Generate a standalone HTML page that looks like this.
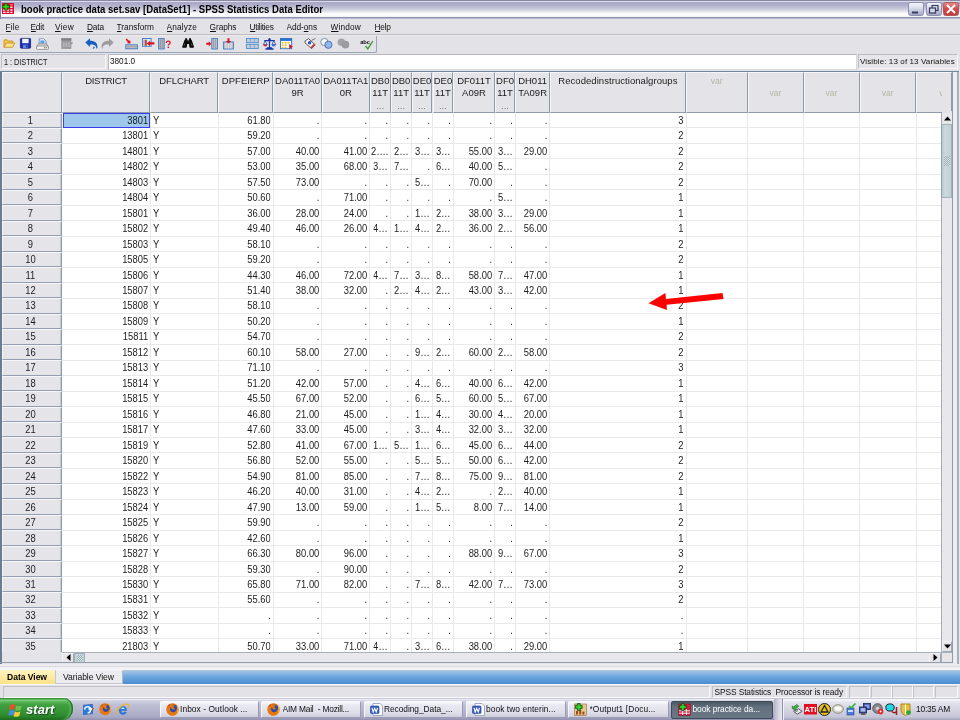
<!DOCTYPE html>
<html><head><meta charset="utf-8"><title>SPSS Statistics Data Editor</title>
<style>
html,body{margin:0;padding:0;}
html{background:#e3e3e7;}
body{will-change:transform;filter:blur(0.35px);width:960px;height:720px;overflow:hidden;background:#e3e3e7;font-family:"Liberation Sans",sans-serif;position:relative;}
div{position:absolute;box-sizing:border-box;}
svg{position:absolute;overflow:visible;}
.t{white-space:nowrap;overflow:hidden;}
u{text-decoration:underline;}
.rh{background:#e5e5e9;border-top:1px solid #f6f6f9;border-left:1px solid #f6f6f9;border-bottom:1px solid #939fb0;border-right:1px solid #8c9aac;box-shadow:inset -1px 0 0 #c4cad4;}
</style></head><body>

<div style="left:0px;top:0px;width:960px;height:19px;background:linear-gradient(to bottom,#8686a0 0px,#8a8aa6 0.7px,#ececf4 1.3px,#a6a6c6 2.2px,#b4b4ce 6px,#d4d4e2 10px,#fafafc 13.5px,#ffffff 15px,#f4f4f8 16.5px,#9090ae 17.2px,#9292b0 17.9px,#c8c8d6 18.7px,#e3e3e7 19px);"></div>
<svg style="left:1.5px;top:2.7px" width="12" height="11" viewBox="0 0 12 11"><rect width="12" height="11" rx=".6" fill="#de0a2c"/><path d="M8.300 3.600h2.200v1.500H8.300zM8.300 6.200h2.200v1.500H8.300zM8.300 8.700h2.200v1.200H8.300zM1 6.600h2.600v1.200H1zM4.600 6.600h2.600v1.200H4.600zM1 8.700h2.600v1.200H1zM4.600 8.700h2.600v1.200H4.600z" fill="#fff" fill-opacity=".92"/><path d="M8.300 1.200h2.200v1.200H8.300z" fill="#f8a0a8"/><path d="M2.800.5h2.400v2h2.200v2.400H5.200v2.200H2.800V4.900H.6V2.500h2.200z" fill="#1fe010" stroke="#0a4a0a" stroke-width=".7"/></svg>
<div style="left:0px;top:0px;width:1px;height:19px;background:#8484a6;"></div>
<div class="t" style="left:21px;top:0.6px;width:360px;height:17px;line-height:17px;font-size:10.3px;text-align:left;color:#000;font-weight:bold;transform:scaleX(0.9275);transform-origin:0 0;">book practice data set.sav [DataSet1] - SPSS Statistics Data Editor</div>
<div style="left:908px;top:2px;width:16px;height:14px;border:1px solid #8d8fb0;border-radius:2.5px;background:linear-gradient(to bottom,#f4f5fb 0%,#d9dbea 45%,#a4a7c6 100%);"></div>
<div style="left:926px;top:2px;width:16px;height:14px;border:1px solid #8d8fb0;border-radius:2.5px;background:linear-gradient(to bottom,#f4f5fb 0%,#d9dbea 45%,#a4a7c6 100%);"></div>
<div style="left:943px;top:2px;width:16px;height:14px;border:1px solid #b05a5a;border-radius:2.5px;background:linear-gradient(to bottom,#e58a86 0%,#d24a48 50%,#c03c3c 100%);"></div>
<svg style="left:908px;top:2px" width="16" height="14"><rect x="4" y="9.5" width="6" height="2" fill="#3a3c5c"/></svg>
<svg style="left:926px;top:2px" width="16" height="14"><rect x="6" y="3.5" width="6" height="5" fill="none" stroke="#3a3c5c" stroke-width="1.2"/><rect x="3.5" y="6" width="6" height="5" fill="#d5d7e8" stroke="#3a3c5c" stroke-width="1.2"/></svg>
<svg style="left:943px;top:2px" width="16" height="14"><path d="M4 3L12 11M12 3L4 11" stroke="#fff" stroke-width="1.9"/></svg>
<div style="left:0px;top:19px;width:960px;height:15px;background:#e3e3e7;"></div>
<div class="t" style="left:5.5px;top:21px;width:20px;height:13px;line-height:13px;font-size:8.3px;text-align:left;color:#111;letter-spacing:0.152px;"><u>F</u>ile</div>
<div class="t" style="left:30.5px;top:21px;width:19.5px;height:13px;line-height:13px;font-size:8.3px;text-align:left;color:#111;letter-spacing:-0.203px;"><u>E</u>dit</div>
<div class="t" style="left:55px;top:21px;width:25px;height:13px;line-height:13px;font-size:8.3px;text-align:left;color:#111;letter-spacing:0.289px;"><u>V</u>iew</div>
<div class="t" style="left:87px;top:21px;width:23px;height:13px;line-height:13px;font-size:8.3px;text-align:left;color:#111;letter-spacing:-0.137px;"><u>D</u>ata</div>
<div class="t" style="left:116.5px;top:21px;width:43.5px;height:13px;line-height:13px;font-size:8.3px;text-align:left;color:#111;letter-spacing:0.000px;"><u>T</u>ransform</div>
<div class="t" style="left:166.5px;top:21px;width:36.5px;height:13px;line-height:13px;font-size:8.3px;text-align:left;color:#111;letter-spacing:0.138px;"><u>A</u>nalyze</div>
<div class="t" style="left:209.5px;top:21px;width:33px;height:13px;line-height:13px;font-size:8.3px;text-align:left;color:#111;letter-spacing:-0.039px;"><u>G</u>raphs</div>
<div class="t" style="left:249.5px;top:21px;width:30px;height:13px;line-height:13px;font-size:8.3px;text-align:left;color:#111;letter-spacing:-0.306px;"><u>U</u>tilities</div>
<div class="t" style="left:286.5px;top:21px;width:36.5px;height:13px;line-height:13px;font-size:8.3px;text-align:left;color:#111;letter-spacing:-0.060px;">Add-<u>o</u>ns</div>
<div class="t" style="left:330.5px;top:21px;width:36.5px;height:13px;line-height:13px;font-size:8.3px;text-align:left;color:#111;letter-spacing:0.162px;"><u>W</u>indow</div>
<div class="t" style="left:374.5px;top:21px;width:22px;height:13px;line-height:13px;font-size:8.3px;text-align:left;color:#111;letter-spacing:-0.270px;"><u>H</u>elp</div>
<div style="left:0px;top:34px;width:960px;height:1px;background:#bcbcc1;"></div>
<div style="left:0px;top:35px;width:960px;height:18px;background:#e3e3e7;border-top:1px solid #ececf0;"></div>
<div style="left:-2px;top:35.5px;width:379px;height:17.5px;border:1px solid #97a8bb;border-top:none;border-radius:0 0 2.5px 0;"></div>
<svg style="left:3px;top:38px" width="13" height="11" viewBox="0 0 13 11"><path d="M1 9.2V2.6q0-.8.8-.8h2.4l1 1.2h4q.8 0 .8.8V5" fill="#f3c54a" stroke="#c48a1c" stroke-width=".8"/><path d="M1 9.3L3.2 5h8.6L9.6 9.3z" fill="#fbe28a" stroke="#c48a1c" stroke-width=".8"/></svg>
<svg style="left:20px;top:37.5px" width="11" height="11" viewBox="0 0 11 11"><rect x=".4" y=".4" width="10.2" height="9.8" rx=".8" fill="#1c2eb6" stroke="#0c146a" stroke-width=".7"/><rect x="2.2" y=".8" width="6.4" height="4.4" fill="#f4f6ff"/><rect x="3" y="6.8" width="5" height="3.2" fill="#5a86e0"/><rect x="6.2" y="7.4" width="1.2" height="2.2" fill="#10208a"/></svg>
<svg style="left:36px;top:38px" width="13" height="12" viewBox="0 0 13 12"><path d="M3.2 6V.8h4.6L10 3v3" fill="#fff" stroke="#6a7aa0" stroke-width=".8"/><rect x="4.3" y="2.4" width="4.2" height="3" fill="#4aa2ee"/><path d="M.6 9.4L2.4 5.8h8.2l1.8 3.6z" fill="#d8d8dc" stroke="#777" stroke-width=".7"/><rect x=".6" y="8" width="11.8" height="3.4" rx=".6" fill="#f4f4f6" stroke="#777" stroke-width=".7"/><rect x="8" y="9.2" width="1.3" height="1.1" fill="#e03030"/><rect x="9.8" y="9.2" width="1.3" height="1.1" fill="#30b040"/></svg>
<svg style="left:60.5px;top:38px" width="12.5" height="11.5" viewBox="0 0 12.5 11.5"><rect x=".3" y=".3" width="10" height="10.6" fill="#9a9a9e"/><rect x="0.3" y=".3" width="10" height="2.2" fill="#808084"/><rect x="2" y="4.4" width="1.6" height="4.6" fill="#b6b6ba"/><rect x="4.6" y="4.4" width="1.6" height="4.6" fill="#b6b6ba"/><rect x="7.2" y="4.4" width="1.6" height="4.6" fill="#b6b6ba"/><path d="M9.2 4.6h3l-1.5 2z" fill="#88888c"/></svg>
<svg style="left:84.5px;top:38px" width="13" height="11" viewBox="0 0 13 11"><path d="M.3 4.4L5 .3v2.5c4.4-.2 7.6 2 7.4 6.2-.1 1-.5 1.7-1.2 1.8.6-2.6-1.6-4.6-6.2-4.2v2.4z" fill="#1560c0"/><path d="M8.2 8.6c.4 1.2-.2 2-1.2 2.2 1.4.3 2.6-.4 2.8-1.8z" fill="#1560c0"/></svg>
<svg style="left:100.8px;top:38px" width="13" height="11" viewBox="0 0 13 11"><path d="M12.7 4.4L8 .3v2.5C3.600 2.600.4 4.800.6 9c.1 1 .5 1.700 1.200 1.800C1.200 8.200 3.400 6.200 8 6.600v2.400z" fill="#9c9c9e"/></svg>
<svg style="left:124.5px;top:38.3px" width="13" height="11.2" viewBox="0 0 13 11.2"><path d="M.6 1.4l1-1 2.600 2.500 1-1 .3 3.600-3.600-.3 1-1z" fill="#e01020"/><rect x=".8" y="6.800" width="11.600" height="4" fill="#c8c8cc" stroke="#3a78c8" stroke-width=".9"/><path d="M1.500 8.800h10.300" stroke="#8a8a90" stroke-width=".8"/></svg>
<svg style="left:141.7px;top:37.8px" width="12.6" height="9.2" viewBox="0 0 12.6 9.2"><rect x=".5" y=".5" width="8.600" height="7.800" fill="#e4e6ee" stroke="#3a78c8" stroke-width=".9"/><rect x="2.600" y="1.800" width="2.200" height="6" fill="#b04848"/><rect x="1.200" y="1.800" width="1" height="6" fill="#b8b8c0"/><path d="M4.800 5.400l3.200-2.700v1.600h4.400v2.200h-4.400v1.600z" fill="#e01020"/></svg>
<svg style="left:157.8px;top:37.8px" width="13" height="11.6" viewBox="0 0 13 11.6"><rect x=".6" y=".6" width="5.600" height="10.400" fill="#b8b8bc" stroke="#3a78c8" stroke-width=".9"/><path d="M2.400 1.500v8.600M4.200 1.500v8.600" stroke="#8a8a90" stroke-width=".7"/><path d="M8.300 5q0-1.800 1.900-1.800t1.900 1.500q0 1-1 1.500-.8.500-.8 1.300" fill="none" stroke="#e01020" stroke-width="1.300"/><rect x="9.600" y="8.600" width="1.400" height="1.400" fill="#e01020"/></svg>
<svg style="left:182px;top:38px" width="12.2" height="10" viewBox="0 0 12.2 10"><path d="M.2 8.800L2.400 2.200q.2-.8.8-.8V.3h1.900v1.100q.6 0 .7.800v1h.6v-1q.1-.8.700-.8V.3h1.900v1.100q.6 0 .8.800l2.200 6.600q.2.900-.6.900H8.200q-.7 0-.8-.8L7 6H5.200l-.4 2.900q-.1.800-.8.800H.8q-.8 0-.6-.9z" fill="#0a0a0a"/><path d="M2.200 7.600l.6-2M9.400 5.600l.6 2" stroke="#888" stroke-width=".6"/></svg>
<svg style="left:205.8px;top:37.8px" width="12.2" height="11.6" viewBox="0 0 12.2 11.6"><rect x="5.800" y=".6" width="5.600" height="10.400" fill="#c4c4c8" stroke="#3a78c8" stroke-width=".9"/><path d="M7.600 1.500v8.600M9.400 1.500v8.600" stroke="#8a8a90" stroke-width=".7"/><path d="M5.400 5.800L2.800 3.200v1.600H.3v2h2.500v1.600z" fill="#e01020"/></svg>
<svg style="left:222.8px;top:37.8px" width="11" height="11.6" viewBox="0 0 11 11.6"><rect x=".6" y="4" width="9.800" height="7" fill="#c4c4c8" stroke="#3a78c8" stroke-width=".9"/><path d="M3 4.800v5.800M5.500 4.800v5.800M8 4.800v5.800" stroke="#f0f0f4" stroke-width=".8"/><path d="M5.500 5.600L2.900 3h1.600V.2h2V3h1.600z" fill="#e01020"/></svg>
<svg style="left:246.3px;top:38px" width="12.8" height="11.2" viewBox="0 0 12.8 11.2"><rect x=".5" y=".5" width="11.800" height="4.200" fill="#c8ccd4" stroke="#4a90d8" stroke-width=".9"/><rect x=".5" y="6.300" width="11.800" height="4.200" fill="#c8ccd4" stroke="#4a90d8" stroke-width=".9"/><path d="M4.400.8v3.600M8.400.8v3.600M4.400 6.600v3.600M8.400 6.600v3.600" stroke="#6aa4e0" stroke-width=".8"/></svg>
<svg style="left:263px;top:37.8px" width="13" height="11.4" viewBox="0 0 13 11.4"><path d="M6.500.2v10M2.400 11h8.200M3.800 10h5.400M1.200 2.600h10.600" stroke="#1838a8" stroke-width="1.300" fill="none"/><circle cx="6.500" cy="1.400" r="1.200" fill="#1838a8"/><path d="M2.200 2.800L.4 6.600h3.800zM10.800 2.800L9 6.600h3.800z" fill="none" stroke="#1838a8" stroke-width=".7"/><path d="M.2 6.400h4.200q-.2 2-2.100 2T.2 6.400z" fill="#e02828"/><path d="M8.600 6.400h4.200q-.2 2-2.100 2t-2.100-2z" fill="#3a6ad8"/></svg>
<svg style="left:279.5px;top:37.8px" width="13" height="11.4" viewBox="0 0 13 11.4"><rect x=".5" y=".5" width="11.200" height="10.200" fill="#fff" stroke="#2a70c8" stroke-width=".9"/><rect x=".5" y=".5" width="11.200" height="2.400" fill="#2a70c8"/><rect x="1.600" y="4" width="2" height="1.600" fill="#f0c030"/><rect x="4.600" y="4" width="2" height="1.600" fill="#f0c030"/><rect x="7.600" y="4" width="2" height="1.600" fill="#f0c030"/><rect x="1.600" y="6.400" width="2" height="1.600" fill="#f0c030"/><rect x="4.600" y="6.400" width="2" height="1.600" fill="#f0c030"/><rect x="1.600" y="8.700" width="2" height="1.400" fill="#f0c030"/><rect x="4.600" y="8.700" width="2" height="1.400" fill="#f0c030"/><path d="M12.800 8.600L9.200 6v5.200z" fill="#e01020"/></svg>
<svg style="left:304px;top:38px" width="12.4" height="11" viewBox="0 0 12.4 11"><path d="M1.200 2.800L4.600.6l6.600 6.200-3.600 3.800L1 4.800z" fill="#f4f4f8" stroke="#333" stroke-width=".8"/><path d="M6.400 9.400l3.400-3.600 1.400 1.200-3.600 3.600z" fill="#d83030"/><circle cx="5.600" cy="4.800" r="1.700" fill="#3050c0"/><path d="M7.600 2.400L11.600.4" stroke="#333" stroke-width=".6"/></svg>
<svg style="left:319.8px;top:38px" width="13" height="11" viewBox="0 0 13 11"><circle cx="4.400" cy="4" r="3.600" fill="#f4f6fa" stroke="#6a7a90" stroke-width=".8"/><circle cx="8.400" cy="6.800" r="3.600" fill="#8ab4ec" fill-opacity=".9" stroke="#3a62b0" stroke-width=".8"/></svg>
<svg style="left:337.2px;top:38.2px" width="13" height="11" viewBox="0 0 13 11"><circle cx="4.400" cy="4.200" r="3.800" fill="#a4a4a6"/><circle cx="8.400" cy="6.600" r="3.900" fill="#9c9c9e"/></svg>
<svg style="left:360px;top:37.5px" width="14" height="12" viewBox="0 0 14 12"><text x=".2" y="5.800" font-family="Liberation Sans, sans-serif" font-size="6" font-weight="bold" fill="#111" textLength="9.800" lengthAdjust="spacingAndGlyphs">abc</text><path d="M5.600 8l2.200 2.800L12.800 3.200" fill="none" stroke="#3a9a2a" stroke-width="1.300"/></svg>
<div style="left:0px;top:53px;width:960px;height:18px;background:#e3e3e7;"></div>
<div style="left:1px;top:54px;width:105px;height:15px;border:1px solid #c2c2c8;border-right-color:#f8f8fa;border-bottom-color:#f8f8fa;background:#e4e4e8;"></div>
<div class="t" style="left:3.5px;top:55.5px;width:100px;height:13px;line-height:13px;font-size:8.4px;text-align:left;color:#111;transform:scaleX(0.865);transform-origin:0 0;">1 : DISTRICT</div>
<div style="left:108px;top:54px;width:749px;height:16px;background:#fff;border:1px solid #d8d8dc;border-top-color:#b8b8be;border-left-color:#b8b8be;"></div>
<div class="t" style="left:110px;top:55.3px;width:100px;height:13px;line-height:13px;font-size:8.2px;text-align:left;color:#111;letter-spacing:-0.008px;">3801.0</div>
<div style="left:858px;top:54px;width:100px;height:15px;border:1px solid #bcbcc2;border-right-color:#f8f8fa;border-bottom-color:#f8f8fa;background:#e6e6ea;"></div>
<div class="t" style="left:860px;top:55.3px;width:99px;height:13px;line-height:13px;font-size:8px;text-align:left;color:#111;letter-spacing:0.111px;">Visible: 13 of 13 Variables</div>
<div style="left:0px;top:70.5px;width:956px;height:593.5px;background:#e4e4e8;border-top:1.5px solid #6f879f;border-left:2px solid #6c7c90;"></div>
<div style="left:62px;top:112.5px;width:880px;height:539.5px;background:#fff;"></div>
<div style="left:2px;top:72px;width:60px;height:40.5px;background:#e4e4e8;border-right:1px solid #8e9aa8;border-left:1px solid #f6f6f8;border-bottom:1px solid #8e9aa8;border-top:1px solid #f6f6f8;"></div>
<div style="left:62px;top:72px;width:88px;height:40.5px;background:#e4e4e8;border-right:1px solid #8e9aa8;border-left:1px solid #f6f6f8;border-bottom:1px solid #8e9aa8;border-top:1px solid #f6f6f8;"></div>
<div class="t" style="left:59px;top:74.8px;width:94px;height:12.6px;line-height:12.6px;font-size:9.5px;text-align:center;color:#1a1a1a;letter-spacing:-0.258px;">DISTRICT</div>
<div style="left:150px;top:72px;width:68.19999999999999px;height:40.5px;background:#e4e4e8;border-right:1px solid #8e9aa8;border-left:1px solid #f6f6f8;border-bottom:1px solid #8e9aa8;border-top:1px solid #f6f6f8;"></div>
<div class="t" style="left:147px;top:74.8px;width:74.19999999999999px;height:12.6px;line-height:12.6px;font-size:9.5px;text-align:center;color:#1a1a1a;letter-spacing:-0.094px;">DFLCHART</div>
<div style="left:218.2px;top:72px;width:55.10000000000002px;height:40.5px;background:#e4e4e8;border-right:1px solid #8e9aa8;border-left:1px solid #f6f6f8;border-bottom:1px solid #8e9aa8;border-top:1px solid #f6f6f8;"></div>
<div class="t" style="left:215.2px;top:74.8px;width:61.10000000000002px;height:12.6px;line-height:12.6px;font-size:9.5px;text-align:center;color:#1a1a1a;letter-spacing:0.060px;">DPFEIERP</div>
<div style="left:273.3px;top:72px;width:48.5px;height:40.5px;background:#e4e4e8;border-right:1px solid #8e9aa8;border-left:1px solid #f6f6f8;border-bottom:1px solid #8e9aa8;border-top:1px solid #f6f6f8;"></div>
<div class="t" style="left:270.3px;top:74.8px;width:54.5px;height:36.7px;line-height:12.6px;font-size:9.5px;text-align:center;color:#1a1a1a;white-space:nowrap">DA011TA0<br>9R</div>
<div style="left:321.8px;top:72px;width:47.89999999999998px;height:40.5px;background:#e4e4e8;border-right:1px solid #8e9aa8;border-left:1px solid #f6f6f8;border-bottom:1px solid #8e9aa8;border-top:1px solid #f6f6f8;"></div>
<div class="t" style="left:318.8px;top:74.8px;width:53.89999999999998px;height:36.7px;line-height:12.6px;font-size:9.5px;text-align:center;color:#1a1a1a;white-space:nowrap">DA011TA1<br>0R</div>
<div style="left:369.7px;top:72px;width:21.0px;height:40.5px;background:#e4e4e8;border-right:1px solid #8e9aa8;border-left:1px solid #f6f6f8;border-bottom:1px solid #8e9aa8;border-top:1px solid #f6f6f8;"></div>
<div class="t" style="left:366.7px;top:74.8px;width:27.0px;height:36.7px;line-height:12.6px;font-size:9.5px;text-align:center;color:#1a1a1a;white-space:nowrap">DB0<br>11T<br><span style="color:#777">...</span></div>
<div style="left:390.7px;top:72px;width:20.900000000000034px;height:40.5px;background:#e4e4e8;border-right:1px solid #8e9aa8;border-left:1px solid #f6f6f8;border-bottom:1px solid #8e9aa8;border-top:1px solid #f6f6f8;"></div>
<div class="t" style="left:387.7px;top:74.8px;width:26.900000000000034px;height:36.7px;line-height:12.6px;font-size:9.5px;text-align:center;color:#1a1a1a;white-space:nowrap">DB0<br>11T<br><span style="color:#777">...</span></div>
<div style="left:411.6px;top:72px;width:20.899999999999977px;height:40.5px;background:#e4e4e8;border-right:1px solid #8e9aa8;border-left:1px solid #f6f6f8;border-bottom:1px solid #8e9aa8;border-top:1px solid #f6f6f8;"></div>
<div class="t" style="left:408.6px;top:74.8px;width:26.899999999999977px;height:36.7px;line-height:12.6px;font-size:9.5px;text-align:center;color:#1a1a1a;white-space:nowrap">DE0<br>11T<br><span style="color:#777">...</span></div>
<div style="left:432.5px;top:72px;width:20.899999999999977px;height:40.5px;background:#e4e4e8;border-right:1px solid #8e9aa8;border-left:1px solid #f6f6f8;border-bottom:1px solid #8e9aa8;border-top:1px solid #f6f6f8;"></div>
<div class="t" style="left:429.5px;top:74.8px;width:26.899999999999977px;height:36.7px;line-height:12.6px;font-size:9.5px;text-align:center;color:#1a1a1a;white-space:nowrap">DE0<br>11T<br><span style="color:#777">...</span></div>
<div style="left:453.4px;top:72px;width:41.200000000000045px;height:40.5px;background:#e4e4e8;border-right:1px solid #8e9aa8;border-left:1px solid #f6f6f8;border-bottom:1px solid #8e9aa8;border-top:1px solid #f6f6f8;"></div>
<div class="t" style="left:450.4px;top:74.8px;width:47.200000000000045px;height:36.7px;line-height:12.6px;font-size:9.5px;text-align:center;color:#1a1a1a;white-space:nowrap">DF011T<br>A09R</div>
<div style="left:494.6px;top:72px;width:20.799999999999955px;height:40.5px;background:#e4e4e8;border-right:1px solid #8e9aa8;border-left:1px solid #f6f6f8;border-bottom:1px solid #8e9aa8;border-top:1px solid #f6f6f8;"></div>
<div class="t" style="left:491.6px;top:74.8px;width:26.799999999999955px;height:36.7px;line-height:12.6px;font-size:9.5px;text-align:center;color:#1a1a1a;white-space:nowrap">DF0<br>11T<br><span style="color:#777">...</span></div>
<div style="left:515.4px;top:72px;width:34.39999999999998px;height:40.5px;background:#e4e4e8;border-right:1px solid #8e9aa8;border-left:1px solid #f6f6f8;border-bottom:1px solid #8e9aa8;border-top:1px solid #f6f6f8;"></div>
<div class="t" style="left:512.4px;top:74.8px;width:40.39999999999998px;height:36.7px;line-height:12.6px;font-size:9.5px;text-align:center;color:#1a1a1a;white-space:nowrap">DH011<br>TA09R</div>
<div style="left:549.8px;top:72px;width:136.20000000000005px;height:40.5px;background:#e4e4e8;border-right:1px solid #8e9aa8;border-left:1px solid #f6f6f8;border-bottom:1px solid #8e9aa8;border-top:1px solid #f6f6f8;"></div>
<div class="t" style="left:546.8px;top:74.8px;width:142.20000000000005px;height:12.6px;line-height:12.6px;font-size:9.5px;text-align:center;color:#1a1a1a;letter-spacing:0.055px;">Recodedinstructionalgroups</div>
<div style="left:686px;top:72px;width:61.5px;height:40.5px;background:#e4e4e8;border-right:1px solid #8e9aa8;border-left:1px solid #f6f6f8;border-bottom:1px solid #8e9aa8;border-top:1px solid #f6f6f8;"></div>
<div class="t" style="left:686px;top:74.6px;width:61.5px;height:12px;line-height:12px;font-size:8.6px;text-align:center;color:#b6b6a6;">var</div>
<div style="left:747.5px;top:72px;width:56.0px;height:40.5px;background:#e4e4e8;border-right:1px solid #8e9aa8;border-left:1px solid #f6f6f8;border-bottom:1px solid #8e9aa8;border-top:1px solid #f6f6f8;"></div>
<div class="t" style="left:747.5px;top:87px;width:56.0px;height:12px;line-height:12px;font-size:8.6px;text-align:center;color:#b6b6a6;">var</div>
<div style="left:803.5px;top:72px;width:56.0px;height:40.5px;background:#e4e4e8;border-right:1px solid #8e9aa8;border-left:1px solid #f6f6f8;border-bottom:1px solid #8e9aa8;border-top:1px solid #f6f6f8;"></div>
<div class="t" style="left:803.5px;top:87px;width:56.0px;height:12px;line-height:12px;font-size:8.6px;text-align:center;color:#b6b6a6;">var</div>
<div style="left:859.5px;top:72px;width:56.5px;height:40.5px;background:#e4e4e8;border-right:1px solid #8e9aa8;border-left:1px solid #f6f6f8;border-bottom:1px solid #8e9aa8;border-top:1px solid #f6f6f8;"></div>
<div class="t" style="left:859.5px;top:87px;width:56.5px;height:12px;line-height:12px;font-size:8.6px;text-align:center;color:#b6b6a6;">var</div>
<div style="left:916px;top:72px;width:36px;height:40.5px;background:#e4e4e8;border-right:1px solid #8e9aa8;border-left:1px solid #f6f6f8;border-bottom:1px solid #8e9aa8;border-top:1px solid #f6f6f8;"></div>
<div class="t" style="left:916px;top:87px;width:36px;height:12px;line-height:12px;font-size:8.6px;color:#b6b6a6;text-align:left;padding-left:23.2px;width:25.7px">var</div>
<div style="left:942.3px;top:110.5px;width:10px;height:2px;background:#e4e4e8;"></div>
<div style="left:0;top:0;width:960px;height:652px;overflow:hidden">
<div style="left:149.5px;top:112.5px;width:1px;height:539.5px;background:#e8e8ed;"></div>
<div style="left:217.7px;top:112.5px;width:1px;height:539.5px;background:#e8e8ed;"></div>
<div style="left:272.8px;top:112.5px;width:1px;height:539.5px;background:#e8e8ed;"></div>
<div style="left:321.3px;top:112.5px;width:1px;height:539.5px;background:#e8e8ed;"></div>
<div style="left:369.2px;top:112.5px;width:1px;height:539.5px;background:#e8e8ed;"></div>
<div style="left:390.2px;top:112.5px;width:1px;height:539.5px;background:#e8e8ed;"></div>
<div style="left:411.1px;top:112.5px;width:1px;height:539.5px;background:#e8e8ed;"></div>
<div style="left:432.0px;top:112.5px;width:1px;height:539.5px;background:#e8e8ed;"></div>
<div style="left:452.9px;top:112.5px;width:1px;height:539.5px;background:#e8e8ed;"></div>
<div style="left:494.1px;top:112.5px;width:1px;height:539.5px;background:#e8e8ed;"></div>
<div style="left:514.9px;top:112.5px;width:1px;height:539.5px;background:#e8e8ed;"></div>
<div style="left:549.3px;top:112.5px;width:1px;height:539.5px;background:#e8e8ed;"></div>
<div style="left:685.5px;top:112.5px;width:1px;height:539.5px;background:#e8e8ed;"></div>
<div style="left:747.0px;top:112.5px;width:1px;height:539.5px;background:#e8e8ed;"></div>
<div style="left:803.0px;top:112.5px;width:1px;height:539.5px;background:#e8e8ed;"></div>
<div style="left:859.0px;top:112.5px;width:1px;height:539.5px;background:#e8e8ed;"></div>
<div style="left:915.5px;top:112.5px;width:1px;height:539.5px;background:#e8e8ed;"></div>
<style>.g{left:0;top:0;width:1025.6px;height:652px;transform:scaleX(0.936);transform-origin:0 0;font-size:10.0px;color:#1c1c1c;}.g div{left:0;width:1025.6px;height:15.47px;line-height:15.47px;}.g span{position:absolute;top:0;height:100%;text-align:right;white-space:nowrap;overflow:hidden;}.g .l{text-align:left;letter-spacing:.45px;}.g .n{left:0;width:64.96px;text-align:center;}.g .c0{left:66.24px;width:92.09px;}.g .c0.l{left:69.87px;width:90.38px;}.g .c1{left:160.26px;width:70.19px;}.g .c1.l{left:163.46px;width:69.66px;}.g .c2{left:233.12px;width:56.20px;}.g .c2.l{left:236.75px;width:55.24px;}.g .c3{left:291.99px;width:49.15px;}.g .c3.l{left:295.62px;width:48.18px;}.g .c4{left:343.80px;width:48.50px;}.g .c4.l{left:347.44px;width:47.54px;}.g .c5{left:394.98px;width:19.76px;}.g .c5.l{left:398.61px;width:18.80px;}.g .c6{left:417.41px;width:19.66px;}.g .c6.l{left:421.05px;width:18.70px;}.g .c7{left:439.74px;width:19.66px;}.g .c7.l{left:443.38px;width:18.70px;}.g .c8{left:462.07px;width:19.66px;}.g .c8.l{left:465.71px;width:18.70px;}.g .c9{left:484.40px;width:41.35px;}.g .c9.l{left:488.03px;width:40.38px;}.g .c10{left:528.42px;width:19.55px;}.g .c10.l{left:532.05px;width:18.59px;}.g .c11{left:550.64px;width:34.08px;}.g .c11.l{left:554.27px;width:33.12px;}.g .c12{left:587.39px;width:142.84px;}.g .c12.l{left:591.03px;width:141.88px;}</style>
<div class="rh" style="left:2px;top:112.5px;width:60px;height:15.47px;"></div>
<div style="left:62px;top:127.47px;width:880px;height:1px;background:#e8e8ed;"></div>
<div class="rh" style="left:2px;top:127.97px;width:60px;height:15.47px;"></div>
<div style="left:62px;top:142.95px;width:880px;height:1px;background:#e8e8ed;"></div>
<div class="rh" style="left:2px;top:143.45px;width:60px;height:15.47px;"></div>
<div style="left:62px;top:158.43px;width:880px;height:1px;background:#e8e8ed;"></div>
<div class="rh" style="left:2px;top:158.93px;width:60px;height:15.47px;"></div>
<div style="left:62px;top:173.9px;width:880px;height:1px;background:#e8e8ed;"></div>
<div class="rh" style="left:2px;top:174.4px;width:60px;height:15.47px;"></div>
<div style="left:62px;top:189.38px;width:880px;height:1px;background:#e8e8ed;"></div>
<div class="rh" style="left:2px;top:189.88px;width:60px;height:15.47px;"></div>
<div style="left:62px;top:204.85px;width:880px;height:1px;background:#e8e8ed;"></div>
<div class="rh" style="left:2px;top:205.35px;width:60px;height:15.47px;"></div>
<div style="left:62px;top:220.32px;width:880px;height:1px;background:#e8e8ed;"></div>
<div class="rh" style="left:2px;top:220.82px;width:60px;height:15.47px;"></div>
<div style="left:62px;top:235.8px;width:880px;height:1px;background:#e8e8ed;"></div>
<div class="rh" style="left:2px;top:236.3px;width:60px;height:15.47px;"></div>
<div style="left:62px;top:251.28px;width:880px;height:1px;background:#e8e8ed;"></div>
<div class="rh" style="left:2px;top:251.78px;width:60px;height:15.47px;"></div>
<div style="left:62px;top:266.75px;width:880px;height:1px;background:#e8e8ed;"></div>
<div class="rh" style="left:2px;top:267.25px;width:60px;height:15.47px;"></div>
<div style="left:62px;top:282.23px;width:880px;height:1px;background:#e8e8ed;"></div>
<div class="rh" style="left:2px;top:282.73px;width:60px;height:15.47px;"></div>
<div style="left:62px;top:297.7px;width:880px;height:1px;background:#e8e8ed;"></div>
<div class="rh" style="left:2px;top:298.2px;width:60px;height:15.47px;"></div>
<div style="left:62px;top:313.17px;width:880px;height:1px;background:#e8e8ed;"></div>
<div class="rh" style="left:2px;top:313.67px;width:60px;height:15.47px;"></div>
<div style="left:62px;top:328.65px;width:880px;height:1px;background:#e8e8ed;"></div>
<div class="rh" style="left:2px;top:329.15px;width:60px;height:15.47px;"></div>
<div style="left:62px;top:344.12px;width:880px;height:1px;background:#e8e8ed;"></div>
<div class="rh" style="left:2px;top:344.62px;width:60px;height:15.47px;"></div>
<div style="left:62px;top:359.6px;width:880px;height:1px;background:#e8e8ed;"></div>
<div class="rh" style="left:2px;top:360.1px;width:60px;height:15.47px;"></div>
<div style="left:62px;top:375.07px;width:880px;height:1px;background:#e8e8ed;"></div>
<div class="rh" style="left:2px;top:375.57px;width:60px;height:15.47px;"></div>
<div style="left:62px;top:390.55px;width:880px;height:1px;background:#e8e8ed;"></div>
<div class="rh" style="left:2px;top:391.05px;width:60px;height:15.47px;"></div>
<div style="left:62px;top:406.02px;width:880px;height:1px;background:#e8e8ed;"></div>
<div class="rh" style="left:2px;top:406.52px;width:60px;height:15.47px;"></div>
<div style="left:62px;top:421.5px;width:880px;height:1px;background:#e8e8ed;"></div>
<div class="rh" style="left:2px;top:422.0px;width:60px;height:15.47px;"></div>
<div style="left:62px;top:436.97px;width:880px;height:1px;background:#e8e8ed;"></div>
<div class="rh" style="left:2px;top:437.47px;width:60px;height:15.47px;"></div>
<div style="left:62px;top:452.45px;width:880px;height:1px;background:#e8e8ed;"></div>
<div class="rh" style="left:2px;top:452.95px;width:60px;height:15.47px;"></div>
<div style="left:62px;top:467.93px;width:880px;height:1px;background:#e8e8ed;"></div>
<div class="rh" style="left:2px;top:468.43px;width:60px;height:15.47px;"></div>
<div style="left:62px;top:483.4px;width:880px;height:1px;background:#e8e8ed;"></div>
<div class="rh" style="left:2px;top:483.9px;width:60px;height:15.47px;"></div>
<div style="left:62px;top:498.88px;width:880px;height:1px;background:#e8e8ed;"></div>
<div class="rh" style="left:2px;top:499.38px;width:60px;height:15.47px;"></div>
<div style="left:62px;top:514.35px;width:880px;height:1px;background:#e8e8ed;"></div>
<div class="rh" style="left:2px;top:514.85px;width:60px;height:15.47px;"></div>
<div style="left:62px;top:529.83px;width:880px;height:1px;background:#e8e8ed;"></div>
<div class="rh" style="left:2px;top:530.33px;width:60px;height:15.47px;"></div>
<div style="left:62px;top:545.3px;width:880px;height:1px;background:#e8e8ed;"></div>
<div class="rh" style="left:2px;top:545.8px;width:60px;height:15.47px;"></div>
<div style="left:62px;top:560.77px;width:880px;height:1px;background:#e8e8ed;"></div>
<div class="rh" style="left:2px;top:561.27px;width:60px;height:15.47px;"></div>
<div style="left:62px;top:576.25px;width:880px;height:1px;background:#e8e8ed;"></div>
<div class="rh" style="left:2px;top:576.75px;width:60px;height:15.47px;"></div>
<div style="left:62px;top:591.72px;width:880px;height:1px;background:#e8e8ed;"></div>
<div class="rh" style="left:2px;top:592.22px;width:60px;height:15.47px;"></div>
<div style="left:62px;top:607.2px;width:880px;height:1px;background:#e8e8ed;"></div>
<div class="rh" style="left:2px;top:607.7px;width:60px;height:15.47px;"></div>
<div style="left:62px;top:622.67px;width:880px;height:1px;background:#e8e8ed;"></div>
<div class="rh" style="left:2px;top:623.17px;width:60px;height:15.47px;"></div>
<div style="left:62px;top:638.15px;width:880px;height:1px;background:#e8e8ed;"></div>
<div class="rh" style="left:2px;top:638.65px;width:60px;height:15.47px;"></div>
<div style="left:62.5px;top:112.5px;width:87px;height:15.475px;background:#9ec7ec;border:1px solid #3b3bf0;"></div>
<div class="g">
<div style="top:112.75px"><span class="n">1</span><span class="c0">3801</span><span class="c1 l">Y</span><span class="c2">61.80</span><span class="c3">.</span><span class="c4">.</span><span class="c5">.</span><span class="c6">.</span><span class="c7">.</span><span class="c8">.</span><span class="c9">.</span><span class="c10">.</span><span class="c11">.</span><span class="c12">3</span></div>
<div style="top:128.22px"><span class="n">2</span><span class="c0">13801</span><span class="c1 l">Y</span><span class="c2">59.20</span><span class="c3">.</span><span class="c4">.</span><span class="c5">.</span><span class="c6">.</span><span class="c7">.</span><span class="c8">.</span><span class="c9">.</span><span class="c10">.</span><span class="c11">.</span><span class="c12">2</span></div>
<div style="top:143.70px"><span class="n">3</span><span class="c0">14801</span><span class="c1 l">Y</span><span class="c2">57.00</span><span class="c3">40.00</span><span class="c4">41.00</span><span class="c5 l" style="left:396.47px">2....</span><span class="c6 l">2...</span><span class="c7 l">3...</span><span class="c8 l">3...</span><span class="c9">55.00</span><span class="c10 l">3...</span><span class="c11">29.00</span><span class="c12">2</span></div>
<div style="top:159.18px"><span class="n">4</span><span class="c0">14802</span><span class="c1 l">Y</span><span class="c2">53.00</span><span class="c3">35.00</span><span class="c4">68.00</span><span class="c5 l">3...</span><span class="c6 l">7...</span><span class="c7">.</span><span class="c8 l">6...</span><span class="c9">40.00</span><span class="c10 l">5...</span><span class="c11">.</span><span class="c12">2</span></div>
<div style="top:174.65px"><span class="n">5</span><span class="c0">14803</span><span class="c1 l">Y</span><span class="c2">57.50</span><span class="c3">73.00</span><span class="c4">.</span><span class="c5">.</span><span class="c6">.</span><span class="c7 l">5...</span><span class="c8">.</span><span class="c9">70.00</span><span class="c10">.</span><span class="c11">.</span><span class="c12">2</span></div>
<div style="top:190.12px"><span class="n">6</span><span class="c0">14804</span><span class="c1 l">Y</span><span class="c2">50.60</span><span class="c3">.</span><span class="c4">71.00</span><span class="c5">.</span><span class="c6">.</span><span class="c7">.</span><span class="c8">.</span><span class="c9">.</span><span class="c10 l">5...</span><span class="c11">.</span><span class="c12">1</span></div>
<div style="top:205.60px"><span class="n">7</span><span class="c0">15801</span><span class="c1 l">Y</span><span class="c2">36.00</span><span class="c3">28.00</span><span class="c4">24.00</span><span class="c5">.</span><span class="c6">.</span><span class="c7 l">1...</span><span class="c8 l">2...</span><span class="c9">38.00</span><span class="c10 l">3...</span><span class="c11">29.00</span><span class="c12">1</span></div>
<div style="top:221.07px"><span class="n">8</span><span class="c0">15802</span><span class="c1 l">Y</span><span class="c2">49.40</span><span class="c3">46.00</span><span class="c4">26.00</span><span class="c5 l">4...</span><span class="c6 l">1...</span><span class="c7 l">4...</span><span class="c8 l">2...</span><span class="c9">36.00</span><span class="c10 l">2...</span><span class="c11">56.00</span><span class="c12">1</span></div>
<div style="top:236.55px"><span class="n">9</span><span class="c0">15803</span><span class="c1 l">Y</span><span class="c2">58.10</span><span class="c3">.</span><span class="c4">.</span><span class="c5">.</span><span class="c6">.</span><span class="c7">.</span><span class="c8">.</span><span class="c9">.</span><span class="c10">.</span><span class="c11">.</span><span class="c12">2</span></div>
<div style="top:252.03px"><span class="n">10</span><span class="c0">15805</span><span class="c1 l">Y</span><span class="c2">59.20</span><span class="c3">.</span><span class="c4">.</span><span class="c5">.</span><span class="c6">.</span><span class="c7">.</span><span class="c8">.</span><span class="c9">.</span><span class="c10">.</span><span class="c11">.</span><span class="c12">2</span></div>
<div style="top:267.50px"><span class="n">11</span><span class="c0">15806</span><span class="c1 l">Y</span><span class="c2">44.30</span><span class="c3">46.00</span><span class="c4">72.00</span><span class="c5 l">4...</span><span class="c6 l">7...</span><span class="c7 l">3...</span><span class="c8 l">8...</span><span class="c9">58.00</span><span class="c10 l">7...</span><span class="c11">47.00</span><span class="c12">1</span></div>
<div style="top:282.98px"><span class="n">12</span><span class="c0">15807</span><span class="c1 l">Y</span><span class="c2">51.40</span><span class="c3">38.00</span><span class="c4">32.00</span><span class="c5">.</span><span class="c6 l">2...</span><span class="c7 l">4...</span><span class="c8 l">2...</span><span class="c9">43.00</span><span class="c10 l">3...</span><span class="c11">42.00</span><span class="c12">1</span></div>
<div style="top:298.45px"><span class="n">13</span><span class="c0">15808</span><span class="c1 l">Y</span><span class="c2">58.10</span><span class="c3">.</span><span class="c4">.</span><span class="c5">.</span><span class="c6">.</span><span class="c7">.</span><span class="c8">.</span><span class="c9">.</span><span class="c10">.</span><span class="c11">.</span><span class="c12">2</span></div>
<div style="top:313.92px"><span class="n">14</span><span class="c0">15809</span><span class="c1 l">Y</span><span class="c2">50.20</span><span class="c3">.</span><span class="c4">.</span><span class="c5">.</span><span class="c6">.</span><span class="c7">.</span><span class="c8">.</span><span class="c9">.</span><span class="c10">.</span><span class="c11">.</span><span class="c12">1</span></div>
<div style="top:329.40px"><span class="n">15</span><span class="c0">15811</span><span class="c1 l">Y</span><span class="c2">54.70</span><span class="c3">.</span><span class="c4">.</span><span class="c5">.</span><span class="c6">.</span><span class="c7">.</span><span class="c8">.</span><span class="c9">.</span><span class="c10">.</span><span class="c11">.</span><span class="c12">2</span></div>
<div style="top:344.88px"><span class="n">16</span><span class="c0">15812</span><span class="c1 l">Y</span><span class="c2">60.10</span><span class="c3">58.00</span><span class="c4">27.00</span><span class="c5">.</span><span class="c6">.</span><span class="c7 l">9...</span><span class="c8 l">2...</span><span class="c9">60.00</span><span class="c10 l">2...</span><span class="c11">58.00</span><span class="c12">2</span></div>
<div style="top:360.35px"><span class="n">17</span><span class="c0">15813</span><span class="c1 l">Y</span><span class="c2">71.10</span><span class="c3">.</span><span class="c4">.</span><span class="c5">.</span><span class="c6">.</span><span class="c7">.</span><span class="c8">.</span><span class="c9">.</span><span class="c10">.</span><span class="c11">.</span><span class="c12">3</span></div>
<div style="top:375.82px"><span class="n">18</span><span class="c0">15814</span><span class="c1 l">Y</span><span class="c2">51.20</span><span class="c3">42.00</span><span class="c4">57.00</span><span class="c5">.</span><span class="c6">.</span><span class="c7 l">4...</span><span class="c8 l">6...</span><span class="c9">40.00</span><span class="c10 l">6...</span><span class="c11">42.00</span><span class="c12">1</span></div>
<div style="top:391.30px"><span class="n">19</span><span class="c0">15815</span><span class="c1 l">Y</span><span class="c2">45.50</span><span class="c3">67.00</span><span class="c4">52.00</span><span class="c5">.</span><span class="c6">.</span><span class="c7 l">6...</span><span class="c8 l">5...</span><span class="c9">60.00</span><span class="c10 l">5...</span><span class="c11">67.00</span><span class="c12">1</span></div>
<div style="top:406.77px"><span class="n">20</span><span class="c0">15816</span><span class="c1 l">Y</span><span class="c2">46.80</span><span class="c3">21.00</span><span class="c4">45.00</span><span class="c5">.</span><span class="c6">.</span><span class="c7 l">1...</span><span class="c8 l">4...</span><span class="c9">30.00</span><span class="c10 l">4...</span><span class="c11">20.00</span><span class="c12">1</span></div>
<div style="top:422.25px"><span class="n">21</span><span class="c0">15817</span><span class="c1 l">Y</span><span class="c2">47.60</span><span class="c3">33.00</span><span class="c4">45.00</span><span class="c5">.</span><span class="c6">.</span><span class="c7 l">3...</span><span class="c8 l">4...</span><span class="c9">32.00</span><span class="c10 l">3...</span><span class="c11">32.00</span><span class="c12">1</span></div>
<div style="top:437.72px"><span class="n">22</span><span class="c0">15819</span><span class="c1 l">Y</span><span class="c2">52.80</span><span class="c3">41.00</span><span class="c4">67.00</span><span class="c5 l">1...</span><span class="c6 l">5...</span><span class="c7 l">1...</span><span class="c8 l">6...</span><span class="c9">45.00</span><span class="c10 l">6...</span><span class="c11">44.00</span><span class="c12">2</span></div>
<div style="top:453.20px"><span class="n">23</span><span class="c0">15820</span><span class="c1 l">Y</span><span class="c2">56.80</span><span class="c3">52.00</span><span class="c4">55.00</span><span class="c5">.</span><span class="c6">.</span><span class="c7 l">5...</span><span class="c8 l">5...</span><span class="c9">50.00</span><span class="c10 l">6...</span><span class="c11">42.00</span><span class="c12">2</span></div>
<div style="top:468.68px"><span class="n">24</span><span class="c0">15822</span><span class="c1 l">Y</span><span class="c2">54.90</span><span class="c3">81.00</span><span class="c4">85.00</span><span class="c5">.</span><span class="c6">.</span><span class="c7 l">7...</span><span class="c8 l">8...</span><span class="c9">75.00</span><span class="c10 l">9...</span><span class="c11">81.00</span><span class="c12">2</span></div>
<div style="top:484.15px"><span class="n">25</span><span class="c0">15823</span><span class="c1 l">Y</span><span class="c2">46.20</span><span class="c3">40.00</span><span class="c4">31.00</span><span class="c5">.</span><span class="c6">.</span><span class="c7 l">4...</span><span class="c8 l">2...</span><span class="c9">.</span><span class="c10 l">2...</span><span class="c11">40.00</span><span class="c12">1</span></div>
<div style="top:499.62px"><span class="n">26</span><span class="c0">15824</span><span class="c1 l">Y</span><span class="c2">47.90</span><span class="c3">13.00</span><span class="c4">59.00</span><span class="c5">.</span><span class="c6">.</span><span class="c7 l">1...</span><span class="c8 l">5...</span><span class="c9">8.00</span><span class="c10 l">7...</span><span class="c11">14.00</span><span class="c12">1</span></div>
<div style="top:515.10px"><span class="n">27</span><span class="c0">15825</span><span class="c1 l">Y</span><span class="c2">59.90</span><span class="c3">.</span><span class="c4">.</span><span class="c5">.</span><span class="c6">.</span><span class="c7">.</span><span class="c8">.</span><span class="c9">.</span><span class="c10">.</span><span class="c11">.</span><span class="c12">2</span></div>
<div style="top:530.58px"><span class="n">28</span><span class="c0">15826</span><span class="c1 l">Y</span><span class="c2">42.60</span><span class="c3">.</span><span class="c4">.</span><span class="c5">.</span><span class="c6">.</span><span class="c7">.</span><span class="c8">.</span><span class="c9">.</span><span class="c10">.</span><span class="c11">.</span><span class="c12">1</span></div>
<div style="top:546.05px"><span class="n">29</span><span class="c0">15827</span><span class="c1 l">Y</span><span class="c2">66.30</span><span class="c3">80.00</span><span class="c4">96.00</span><span class="c5">.</span><span class="c6">.</span><span class="c7">.</span><span class="c8">.</span><span class="c9">88.00</span><span class="c10 l">9...</span><span class="c11">67.00</span><span class="c12">3</span></div>
<div style="top:561.52px"><span class="n">30</span><span class="c0">15828</span><span class="c1 l">Y</span><span class="c2">59.30</span><span class="c3">.</span><span class="c4">90.00</span><span class="c5">.</span><span class="c6">.</span><span class="c7">.</span><span class="c8">.</span><span class="c9">.</span><span class="c10">.</span><span class="c11">.</span><span class="c12">2</span></div>
<div style="top:577.00px"><span class="n">31</span><span class="c0">15830</span><span class="c1 l">Y</span><span class="c2">65.80</span><span class="c3">71.00</span><span class="c4">82.00</span><span class="c5">.</span><span class="c6">.</span><span class="c7 l">7...</span><span class="c8 l">8...</span><span class="c9">42.00</span><span class="c10 l">7...</span><span class="c11">73.00</span><span class="c12">3</span></div>
<div style="top:592.47px"><span class="n">32</span><span class="c0">15831</span><span class="c1 l">Y</span><span class="c2">55.60</span><span class="c3">.</span><span class="c4">.</span><span class="c5">.</span><span class="c6">.</span><span class="c7">.</span><span class="c8">.</span><span class="c9">.</span><span class="c10">.</span><span class="c11">.</span><span class="c12">2</span></div>
<div style="top:607.95px"><span class="n">33</span><span class="c0">15832</span><span class="c1 l">Y</span><span class="c2">.</span><span class="c3">.</span><span class="c4">.</span><span class="c5">.</span><span class="c6">.</span><span class="c7">.</span><span class="c8">.</span><span class="c9">.</span><span class="c10">.</span><span class="c11">.</span><span class="c12">.</span></div>
<div style="top:623.42px"><span class="n">34</span><span class="c0">15833</span><span class="c1 l">Y</span><span class="c2">.</span><span class="c3">.</span><span class="c4">.</span><span class="c5">.</span><span class="c6">.</span><span class="c7">.</span><span class="c8">.</span><span class="c9">.</span><span class="c10">.</span><span class="c11">.</span><span class="c12">.</span></div>
<div style="top:638.90px"><span class="n">35</span><span class="c0">21803</span><span class="c1 l">Y</span><span class="c2">50.70</span><span class="c3">33.00</span><span class="c4">71.00</span><span class="c5 l">4...</span><span class="c6">.</span><span class="c7 l">3...</span><span class="c8 l">6...</span><span class="c9">38.00</span><span class="c10">.</span><span class="c11">29.00</span><span class="c12">1</span></div>
</div>
</div>
<div style="left:941.3px;top:112.5px;width:11.2px;height:539.5px;background:#e8e8ec;border-left:1px solid #a4aab6;"></div>
<div style="left:942.3px;top:112.5px;width:10.2px;height:10.8px;background:#e8e8ec;"></div>
<svg style="left:942px;top:113px" width="11" height="11"><path d="M2 7.5L5.5 3.5L9 7.5Z" fill="#000"/></svg>
<div style="left:941.3px;top:124px;width:11.2px;height:74px;background:linear-gradient(to right,#b9cace,#cbd9dc 35%,#c1d0d4);border:1px solid #9fb2ba;border-left-color:#8ea4ac;border-radius:1px;"></div>
<div style="left:944.2px;top:155.5px;width:6px;height:10px;background:repeating-conic-gradient(#9db0b6 0% 25%, #d5e0e3 0% 50%) 0 0/2px 2px;"></div>
<div style="left:941.8px;top:640.5px;width:10.7px;height:11px;background:#e6e6ea;border:1px solid #f4f4f8;border-right-color:#a0a8b4;border-bottom-color:#a0a8b4;"></div>
<svg style="left:942px;top:641px" width="11" height="11"><path d="M2 3.5L5.5 7.5L9 3.5Z" fill="#000"/></svg>
<div style="left:952.3px;top:72px;width:1.1px;height:591px;background:#8b9caf;"></div>
<div style="left:953.4px;top:72px;width:3.9px;height:592px;background:#ededf1;"></div>
<div style="left:957.2px;top:70.5px;width:1.5px;height:593.5px;background:#a7b0bd;"></div>
<div style="left:0px;top:70.5px;width:958.7px;height:1.5px;background:#6f879f;"></div>
<div style="left:958.7px;top:70px;width:1.3px;height:598px;background:#e8e8ec;"></div>
<div style="left:62px;top:652px;width:890.3px;height:10.6px;background:#e8e8ec;border-top:1px solid #a8b0ba;"></div>
<div style="left:62px;top:652.5px;width:11.5px;height:10px;background:#e6e6ea;border:1px solid #f4f4f8;border-right-color:#a0a8b4;border-bottom-color:#a0a8b4;"></div>
<svg style="left:63px;top:652px" width="11" height="11"><path d="M7.5 2L3.5 5.5L7.5 9Z" fill="#000"/></svg>
<div style="left:74px;top:652.5px;width:11px;height:10px;background:#c3d2d6;border:1px solid #9fb2ba;"></div>
<div style="left:76.5px;top:654.5px;width:6px;height:6px;background:repeating-conic-gradient(#9db0b6 0% 25%, #d5e0e3 0% 50%) 0 0/2px 2px;"></div>
<div style="left:929.4px;top:652.5px;width:11.2px;height:10px;background:#e6e6ea;border:1px solid #f4f4f8;border-right-color:#a0a8b4;border-bottom-color:#a0a8b4;"></div>
<svg style="left:930px;top:652px" width="11" height="11"><path d="M3.5 2L7.5 5.5L3.5 9Z" fill="#000"/></svg>
<div style="left:941.3px;top:652px;width:11px;height:10.6px;background:#e6e6ea;border-left:1px solid #a4aab6;border-top:1px solid #a8b0ba;"></div>
<div style="left:0px;top:662.4px;width:953.4px;height:1.1px;background:#8e9cac;"></div>
<div style="left:0px;top:663.5px;width:957.2px;height:1px;background:#e6e6ea;"></div>
<div style="left:0px;top:664.2px;width:960px;height:6px;background:linear-gradient(to bottom,#ececf0 0,#ececf0 2px,#d9d9de 2.6px,#f3f3f6 3.6px,#f3f3f6 100%);"></div>
<svg style="left:0;top:0" width="960" height="720"><polygon points="648.5,303.2 665.4,292.9 666,299 722.5,293.1 723.5,299 666.6,304.8 666.9,310" fill="#ff0000"/></svg>
<div style="left:0px;top:669.5px;width:960px;height:14.5px;background:linear-gradient(to bottom,#b4c8dc 0%,#94bce4 18%,#6ea8e0 45%,#4a8cd0 100%);"></div>
<div style="left:0px;top:669.5px;width:56px;height:14px;background:linear-gradient(to bottom,#fef4c4,#fbe286);border-right:1px solid #c8c8cc;"></div>
<div class="t" style="left:7px;top:670px;width:50px;height:14px;line-height:14px;font-size:8.6px;text-align:left;color:#000;font-weight:bold;letter-spacing:-0.050px;">Data View</div>
<div style="left:56px;top:669.5px;width:66.5px;height:14px;background:#ececf0;border-right:1px solid #b8b8c4;border-bottom:1px solid #c4c4cc;border-top:1.5px solid #f4f4f8;"></div>
<div class="t" style="left:63px;top:670px;width:60px;height:14px;line-height:14px;font-size:8.6px;text-align:left;color:#111;letter-spacing:-0.059px;">Variable View</div>
<div style="left:0px;top:684px;width:960px;height:15px;background:#e3e3e7;"></div>
<div style="left:0px;top:684px;width:960px;height:1px;background:#f6f6f8;"></div>
<div style="left:3px;top:685.5px;width:707px;height:12px;border:1px solid #c0c0c6;border-right-color:#fafafc;border-bottom-color:#fafafc;"></div>
<div style="left:712px;top:685.5px;width:135px;height:12px;border:1px solid #c0c0c6;border-right-color:#fafafc;border-bottom-color:#fafafc;"></div>
<div class="t" style="left:714.5px;top:685.5px;width:132px;height:12px;line-height:12px;font-size:8.4px;text-align:left;color:#111;letter-spacing:-0.105px;">SPSS Statistics&nbsp; Processor is ready</div>
<div style="left:849px;top:685.5px;width:21px;height:12px;border:1px solid #c0c0c6;border-right-color:#fafafc;border-bottom-color:#fafafc;"></div>
<div style="left:871px;top:685.5px;width:21px;height:12px;border:1px solid #c0c0c6;border-right-color:#fafafc;border-bottom-color:#fafafc;"></div>
<div style="left:892px;top:685.5px;width:21px;height:12px;border:1px solid #c0c0c6;border-right-color:#fafafc;border-bottom-color:#fafafc;"></div>
<div style="left:913px;top:685.5px;width:21px;height:12px;border:1px solid #c0c0c6;border-right-color:#fafafc;border-bottom-color:#fafafc;"></div>
<div style="left:935px;top:685.5px;width:23px;height:12px;border:1px solid #c0c0c6;border-right-color:#fafafc;border-bottom-color:#fafafc;"></div>
<div style="left:0px;top:698px;width:960px;height:22px;background:linear-gradient(to bottom,#a6a6ba 0,#f4f4fa 1.2px,#d2d2e2 2.6px,#bebed4 7px,#b4b4cc 13px,#a9a9c4 19px,#9090ae 22px);"></div>
<div style="left:0px;top:698.3px;width:72.5px;height:21.7px;background:linear-gradient(to bottom,#2f7f2f 0,#4fae4f 1px,#7acc7a 2.300px,#56b256 4px,#3fa03f 7px,#389838 12px,#2f8c2f 17px,#257a25 20px,#1c691c 100%);border-radius:0 9px 10px 0/0 10px 11px 0;box-shadow:inset -2px 0 1.500px -0.500px #1d651d, inset -4px 0 2px -1px #6cc46c;"></div>
<svg style="left:7.5px;top:701.5px" width="14" height="14" viewBox="0 0 14 14"><g transform="scale(1.220)"><path d="M1.600 2.600q2.200-1.400 4.400-.2L5 6.200q-2.200-1.200-4.400.2z" fill="#e8502c"/><path d="M6.800 2.800q2.200 1.200 4.600-.2l-1 3.800q-2.400 1.400-4.600.2z" fill="#6cc04c"/><path d="M.4 7.400q2.200-1.400 4.400-.2l-1 3.800q-2.200-1.200-4.400.2z" fill="#4a8ae8" transform="translate(.8 0)"/><path d="M5.600 7.800q2.200 1.200 4.600-.2l-1 3.800q-2.400 1.400-4.600.2z" fill="#f4cc34"/></g></svg>
<div class="t" style="left:26px;top:699.5px;width:44px;height:19px;line-height:19px;font-size:13px;text-align:left;color:#fff;font-weight:bold;font-style:italic;text-shadow:1px 1px 1px #1a4a1a;letter-spacing:0.062px;">start</div>
<svg style="left:81.5px;top:703.5px" width="12" height="11" viewBox="0 0 12 11"><path d="M1.500 1.200L10.500.4v9.200l-9 1z" fill="#2a7ae0" stroke="#1c52a8" stroke-width=".6"/><path d="M2.600 5.600a3 3 0 1 1 3 3.200" fill="none" stroke="#e8f2ff" stroke-width="1.500"/><path d="M6.500 4.200h3.500v1.600H6.500z" fill="#fff"/><circle cx="11" cy="4.600" r=".9" fill="#e05020"/></svg>
<svg style="left:98.8px;top:702.8px" width="12.4" height="12.4" viewBox="0 0 12.4 12.4"><g transform="scale(0.9538461538461539)"><circle cx="6.5" cy="6.5" r="6.2" fill="#e2700e"/><circle cx="7.3" cy="5.7" r="3.9" fill="#2c4cae"/><path d="M8.6 2.4q-1.600 1.200-1 2.600l1.600.4q-.8 1.200-2.400 1-1.800-.4-1.600-2.400-1.600 1-1.200 3 .8 2.600 3.600 2.400 2.800-.6 3.200-3.600l.4 2.800-2.400 3.600-4.400.4-3.200-3 .2-5.200 3-2.800z" fill="#e8780e"/><path d="M10.4 1.800q2.600 2.400 1.800 6.200-.6 2.200-2.400 3.400 2-2.200 1.800-5.200-.2-2.400-1.200-4.400z" fill="#f8c838"/><path d="M1.400 3.600q.6-1.800 2.600-2.600-.6 1.200-.4 2.200z" fill="#c8480c"/></g></svg>
<svg style="left:116px;top:703.3px" width="14" height="13" viewBox="0 0 14 13"><path d="M3.200 7.400h7.400q.2-4-3.600-4.200-3.800.2-3.800 4.200 0 3.800 3.800 4 2.600 0 3.400-2.200H8.200q-.4.800-1.400.8-1.600 0-1.600-1.800z" fill="#2a84e8" stroke="#1a5cc0" stroke-width=".5"/><path d="M5.300 6q.2-1.400 1.600-1.400T8.500 6z" fill="#e8f0ff"/><path d="M1.600 11.600Q-.8 8.400 4.400 4 9.800-.2 12.600 1.400q1 1-.4 3.200" fill="none" stroke="#f2b418" stroke-width="1.100"/></svg>
<div style="left:160px;top:701px;width:98.5px;height:17px;border-radius:2px;background:linear-gradient(to bottom,#fafafd 0%,#e9e9f2 20%,#dfdfea 70%,#cfcfde 100%);border:1px solid #f8f8fc;border-right-color:#9a9ab4;border-bottom-color:#9a9ab4;"></div>
<svg style="left:165.5px;top:702.5px" width="13" height="13" viewBox="0 0 13 13"><g transform="scale(1.0)"><circle cx="6.5" cy="6.5" r="6.2" fill="#e2700e"/><circle cx="7.3" cy="5.7" r="3.9" fill="#2c4cae"/><path d="M8.6 2.4q-1.600 1.200-1 2.600l1.600.4q-.8 1.200-2.400 1-1.800-.4-1.600-2.400-1.600 1-1.200 3 .8 2.600 3.600 2.400 2.800-.6 3.200-3.600l.4 2.800-2.400 3.600-4.400.4-3.200-3 .2-5.200 3-2.800z" fill="#e8780e"/><path d="M10.4 1.800q2.600 2.400 1.800 6.200-.6 2.200-2.400 3.400 2-2.200 1.800-5.200-.2-2.400-1.200-4.400z" fill="#f8c838"/><path d="M1.400 3.600q.6-1.800 2.600-2.600-.6 1.200-.4 2.200z" fill="#c8480c"/></g></svg>
<div class="t" style="left:180px;top:702px;width:78.5px;height:15px;line-height:15px;font-size:8.4px;text-align:left;color:#111;letter-spacing:0.073px;">Inbox - Outlook ...</div>
<div style="left:261px;top:701px;width:100px;height:17px;border-radius:2px;background:linear-gradient(to bottom,#fafafd 0%,#e9e9f2 20%,#dfdfea 70%,#cfcfde 100%);border:1px solid #f8f8fc;border-right-color:#9a9ab4;border-bottom-color:#9a9ab4;"></div>
<svg style="left:266.5px;top:702.5px" width="13" height="13" viewBox="0 0 13 13"><g transform="scale(1.0)"><circle cx="6.5" cy="6.5" r="6.2" fill="#e2700e"/><circle cx="7.3" cy="5.7" r="3.9" fill="#2c4cae"/><path d="M8.6 2.4q-1.600 1.200-1 2.600l1.600.4q-.8 1.200-2.400 1-1.800-.4-1.600-2.400-1.600 1-1.200 3 .8 2.600 3.600 2.400 2.800-.6 3.200-3.600l.4 2.800-2.400 3.600-4.400.4-3.200-3 .2-5.200 3-2.800z" fill="#e8780e"/><path d="M10.4 1.800q2.600 2.400 1.800 6.200-.6 2.200-2.400 3.400 2-2.200 1.800-5.200-.2-2.400-1.200-4.400z" fill="#f8c838"/><path d="M1.400 3.600q.6-1.800 2.600-2.600-.6 1.200-.4 2.200z" fill="#c8480c"/></g></svg>
<div class="t" style="left:282.5px;top:702px;width:78.5px;height:15px;line-height:15px;font-size:8.4px;text-align:left;color:#111;letter-spacing:-0.202px;">AIM Mail&nbsp; - Mozill...</div>
<div style="left:363.5px;top:701px;width:99.5px;height:17px;border-radius:2px;background:linear-gradient(to bottom,#fafafd 0%,#e9e9f2 20%,#dfdfea 70%,#cfcfde 100%);border:1px solid #f8f8fc;border-right-color:#9a9ab4;border-bottom-color:#9a9ab4;"></div>
<svg style="left:369.5px;top:702.5px" width="13" height="13" viewBox="0 0 13 13"><path d="M3 .5h7l2.500 2.500v9.500H3z" fill="#fdfdff" stroke="#7a8ab0" stroke-width=".7"/><rect x=".5" y="3" width="8.500" height="7.500" rx="1" fill="#3a62c4" stroke="#1c3a8c" stroke-width=".6"/><path d="M2 4.800l1.200 4.200 1.500-3.600 1.500 3.600 1.300-4.200" fill="none" stroke="#fff" stroke-width="1.100"/></svg>
<div class="t" style="left:384.0px;top:702px;width:79.0px;height:15px;line-height:15px;font-size:8.4px;text-align:left;color:#111;letter-spacing:-0.051px;">Recoding_Data_...</div>
<div style="left:465.5px;top:701px;width:100.5px;height:17px;border-radius:2px;background:linear-gradient(to bottom,#fafafd 0%,#e9e9f2 20%,#dfdfea 70%,#cfcfde 100%);border:1px solid #f8f8fc;border-right-color:#9a9ab4;border-bottom-color:#9a9ab4;"></div>
<svg style="left:471.5px;top:702.5px" width="13" height="13" viewBox="0 0 13 13"><path d="M3 .5h7l2.500 2.500v9.500H3z" fill="#fdfdff" stroke="#7a8ab0" stroke-width=".7"/><rect x=".5" y="3" width="8.500" height="7.500" rx="1" fill="#3a62c4" stroke="#1c3a8c" stroke-width=".6"/><path d="M2 4.800l1.200 4.200 1.500-3.600 1.500 3.600 1.300-4.200" fill="none" stroke="#fff" stroke-width="1.100"/></svg>
<div class="t" style="left:486.0px;top:702px;width:80.0px;height:15px;line-height:15px;font-size:8.4px;text-align:left;color:#111;letter-spacing:0.069px;">book two enterin...</div>
<div style="left:568px;top:701px;width:100.79999999999995px;height:17px;border-radius:2px;background:linear-gradient(to bottom,#fafafd 0%,#e9e9f2 20%,#dfdfea 70%,#cfcfde 100%);border:1px solid #f8f8fc;border-right-color:#9a9ab4;border-bottom-color:#9a9ab4;"></div>
<svg style="left:574px;top:702.5px" width="13" height="13" viewBox="0 0 13 13"><rect x=".5" y="1" width="12" height="11.500" fill="#e8c890" stroke="#8a6a3a" stroke-width=".6"/><rect x="2" y="8" width="2" height="3.500" fill="#a04818"/><rect x="5.200" y="7" width="2" height="4.500" fill="#a04818"/><rect x="8.400" y="8.600" width="2" height="2.900" fill="#a04818"/><path d="M3.400.6h2.800v2h2v2.800h-2v2H3.400v-2h-2V2.600h2z" fill="#2fd02f" stroke="#0a3a0a" stroke-width=".7"/></svg>
<div class="t" style="left:589.5px;top:702px;width:79.29999999999995px;height:15px;line-height:15px;font-size:8.4px;text-align:left;color:#111;letter-spacing:0.103px;">*Output1 [Docu...</div>
<div style="left:671px;top:700.5px;width:101.5px;height:18px;border-radius:2px;background:linear-gradient(to bottom,#4a5866 0%,#62707e 30%,#6a7886 100%);border:1px solid #3e4a56;"></div>
<svg style="left:678px;top:703px" width="13" height="13" viewBox="0 0 13 13"><rect x=".5" y="1" width="12" height="11.500" fill="#d21a3c" stroke="#8a1a2a" stroke-width=".6"/><path d="M1 7.800H12M1 10.200H12M4.600 6V12M8.400 6V12" stroke="#fff" stroke-width=".9"/><path d="M3.400.6h2.800v2h2v2.800h-2v2H3.400v-2h-2V2.600h2z" fill="#2fd02f" stroke="#0a3a0a" stroke-width=".7"/></svg>
<div class="t" style="left:692.5px;top:702px;width:79px;height:15px;line-height:15px;font-size:8.4px;text-align:left;color:#fff;letter-spacing:-0.049px;">book practice da...</div>
<div style="left:773.5px;top:699px;width:9px;height:21px;background:linear-gradient(to right,#b4b4cc,#dcdce8 60%,#ececf4);"></div>
<div style="left:782px;top:699px;width:178px;height:21px;background:linear-gradient(to bottom,#fbfbfd 0%,#e4e4ee 15%,#d4d4e2 50%,#c6c6d8 85%,#a4a4c0 100%);border-left:1px solid #8e8eac;box-shadow:inset 1px 0 0 #f4f4fa;"></div>
<svg style="left:790.5px;top:702.5px" width="12" height="13" viewBox="0 0 12 13"><path d="M2.500 8.200l5-2.400 3.600 2.600-5 2.800z" fill="#e8e8ec" stroke="#3a3a44" stroke-width=".8"/><path d="M3.600 9.400l3.400-1.800" stroke="#555" stroke-width=".7"/><path d="M1.400 5.800l3.800 1.400-.4-1.600 3-2.400-2-1.800-3 2.400L1.200 3z" fill="#3cb03c" stroke="#1a5a1a" stroke-width=".5"/></svg>
<svg style="left:803.5px;top:703.5px" width="13" height="11" viewBox="0 0 13 11"><rect width="13" height="10.500" fill="#e01020"/><text x=".6" y="8.400" font-family="Liberation Sans, sans-serif" font-weight="bold" font-size="7.500" fill="#fff" textLength="11.800" lengthAdjust="spacingAndGlyphs">ATI</text></svg>
<svg style="left:817.5px;top:702.5px" width="13" height="13" viewBox="0 0 13 13"><circle cx="6.500" cy="6.500" r="6" fill="#e8c020" stroke="#222" stroke-width="1"/><path d="M6.500 2.500L10 9H3z" fill="none" stroke="#222" stroke-width="1.300"/></svg>
<svg style="left:832px;top:704px" width="12" height="10" viewBox="0 0 12 10"><ellipse cx="6" cy="5" rx="5.400" ry="4.300" fill="#d4d4c8" stroke="#8a8a78" stroke-width=".9"/><ellipse cx="6" cy="4.600" rx="3.600" ry="2.300" fill="#fafaf6"/></svg>
<svg style="left:846px;top:702.5px" width="11" height="13" viewBox="0 0 11 13"><rect x="1" y="5" width="7" height="7" fill="#4a7ad8" stroke="#2a4a98" stroke-width=".6"/><rect x="2" y="7" width="5" height="2" fill="#cfe0ff"/><path d="M3 3l2 2 4.500-4.500" fill="none" stroke="#28b028" stroke-width="1.500"/></svg>
<svg style="left:858.5px;top:703px" width="12" height="12" viewBox="0 0 12 12"><rect x="4.500" y=".5" width="7" height="6" fill="#3a4a98" stroke="#1c2858" stroke-width=".8"/><rect x="5.600" y="1.600" width="4.800" height="3.600" fill="#8aa0e0"/><rect x=".5" y="4" width="7" height="6" fill="#3a4a98" stroke="#1c2858" stroke-width=".8"/><rect x="1.600" y="5.100" width="4.800" height="3.600" fill="#a8bcf0"/><rect x="2" y="10.500" width="4.500" height="1.200" fill="#333"/></svg>
<svg style="left:872px;top:703px" width="12" height="12" viewBox="0 0 12 12"><circle cx="5.500" cy="5.500" r="4.800" fill="#8a8a8e" stroke="#444" stroke-width=".8"/><circle cx="5.500" cy="5.500" r="1.800" fill="#d0d0d4"/><circle cx="8.600" cy="8.600" r="2.800" fill="#e02828"/><circle cx="8.600" cy="8.600" r="1" fill="#fff"/></svg>
<svg style="left:885px;top:702.5px" width="14" height="13" viewBox="0 0 14 13"><ellipse cx="5" cy="4.500" rx="4.200" ry="3.600" fill="#20d8e8" stroke="#111" stroke-width=".9"/><path d="M7 8.500q2.500 2.500 5-.5M11.500 4v8" fill="none" stroke="#a01818" stroke-width="1.500"/></svg>
<svg style="left:900px;top:702.5px" width="12" height="13" viewBox="0 0 12 13"><path d="M1 1h9v7q-1 3.500-4.500 4.500Q2 11.500 1 8z" fill="#e8c040" stroke="#a07a10" stroke-width=".8"/><path d="M5.500 1.500v10" stroke="#fff" stroke-width="1"/><circle cx="8.600" cy="9.600" r="2.400" fill="#28a838"/></svg>
<div class="t" style="left:916px;top:702px;width:42px;height:15px;line-height:15px;font-size:8.4px;text-align:left;color:#111;letter-spacing:-0.174px;">10:35 AM</div>
</body></html>
